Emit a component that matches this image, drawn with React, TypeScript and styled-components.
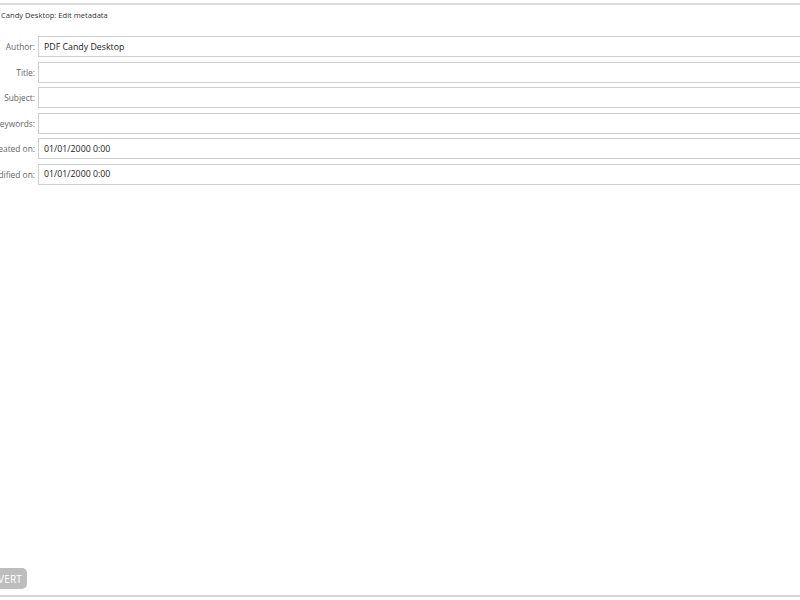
import React from "react";
import styled, { createGlobalStyle } from "styled-components";

const GlobalStyle = createGlobalStyle`
  html, body {
    margin: 0;
    padding: 0;
    background: #fff;
    overflow: hidden;
  }
`;

const Viewport = styled.div`
  width: 800px;
  height: 600px;
  overflow: hidden;
  background: #fff;
`;

const Window = styled.div`
  width: 880px;
  height: 600px;
  margin-left: -45px;
  box-sizing: border-box;
  padding-top: 3px;
  display: flex;
  flex-direction: column;
  font-family: "Open Sans", "Noto Sans", sans-serif;
`;

const Frame = styled.div`
  flex: 1;
  display: flex;
  flex-direction: column;
  border-top: 2px solid #dcdcdc;
  border-bottom: 2px solid #d6d6d6;
  margin-bottom: 3px;
`;

const TitleBar = styled.div`
  height: 20px;
  display: flex;
  align-items: center;
  padding-left: 30px;
  font-size: 7.6px;
  color: #333;
`;

const Form = styled.div`
  display: grid;
  grid-template-columns: 80px 1fr;
  column-gap: 3px;
  row-gap: 4.5px;
  padding-top: 11px;
  align-items: center;
`;

const Label = styled.label`
  text-align: right;
  font-size: 8.4px;
  color: #666;
`;

const Field = styled.div`
  height: 21px;
  box-sizing: border-box;
  border: 1px solid #cfcfcf;
  display: flex;
  align-items: center;
  padding-left: 5px;
  font-size: 8.8px;
  color: #222;
`;

const Spacer = styled.div`
  flex: 1;
`;

const Footer = styled.div`
  height: 27px;
  display: flex;
  align-items: flex-start;
`;

const ConvertButton = styled.button`
  height: 21px;
  width: 72px;
  border: none;
  border-radius: 5px;
  background: #bdbdbd;
  color: #fff;
  font-family: "Open Sans", "Noto Sans", sans-serif;
  font-size: 10px;
  text-align: right;
  padding: 0 5px 0 0;
  letter-spacing: 0.2px;
`;

const rows: [string, string][] = [
  ["Author:", "PDF Candy Desktop"],
  ["Title:", ""],
  ["Subject:", ""],
  ["Keywords:", ""],
  ["Created on:", "01/01/2000 0:00"],
  ["Modified on:", "01/01/2000 0:00"],
];

export default function App() {
  return (
    <>
      <GlobalStyle />
      <Viewport>
        <Window>
          <Frame>
            <TitleBar>PDF Candy Desktop: Edit metadata</TitleBar>
            <Form>
              {rows.map(([label, value]) => (
                <React.Fragment key={label}>
                  <Label>{label}</Label>
                  <Field>{value}</Field>
                </React.Fragment>
              ))}
            </Form>
            <Spacer />
            <Footer>
              <ConvertButton>CONVERT</ConvertButton>
            </Footer>
          </Frame>
        </Window>
      </Viewport>
    </>
  );
}
